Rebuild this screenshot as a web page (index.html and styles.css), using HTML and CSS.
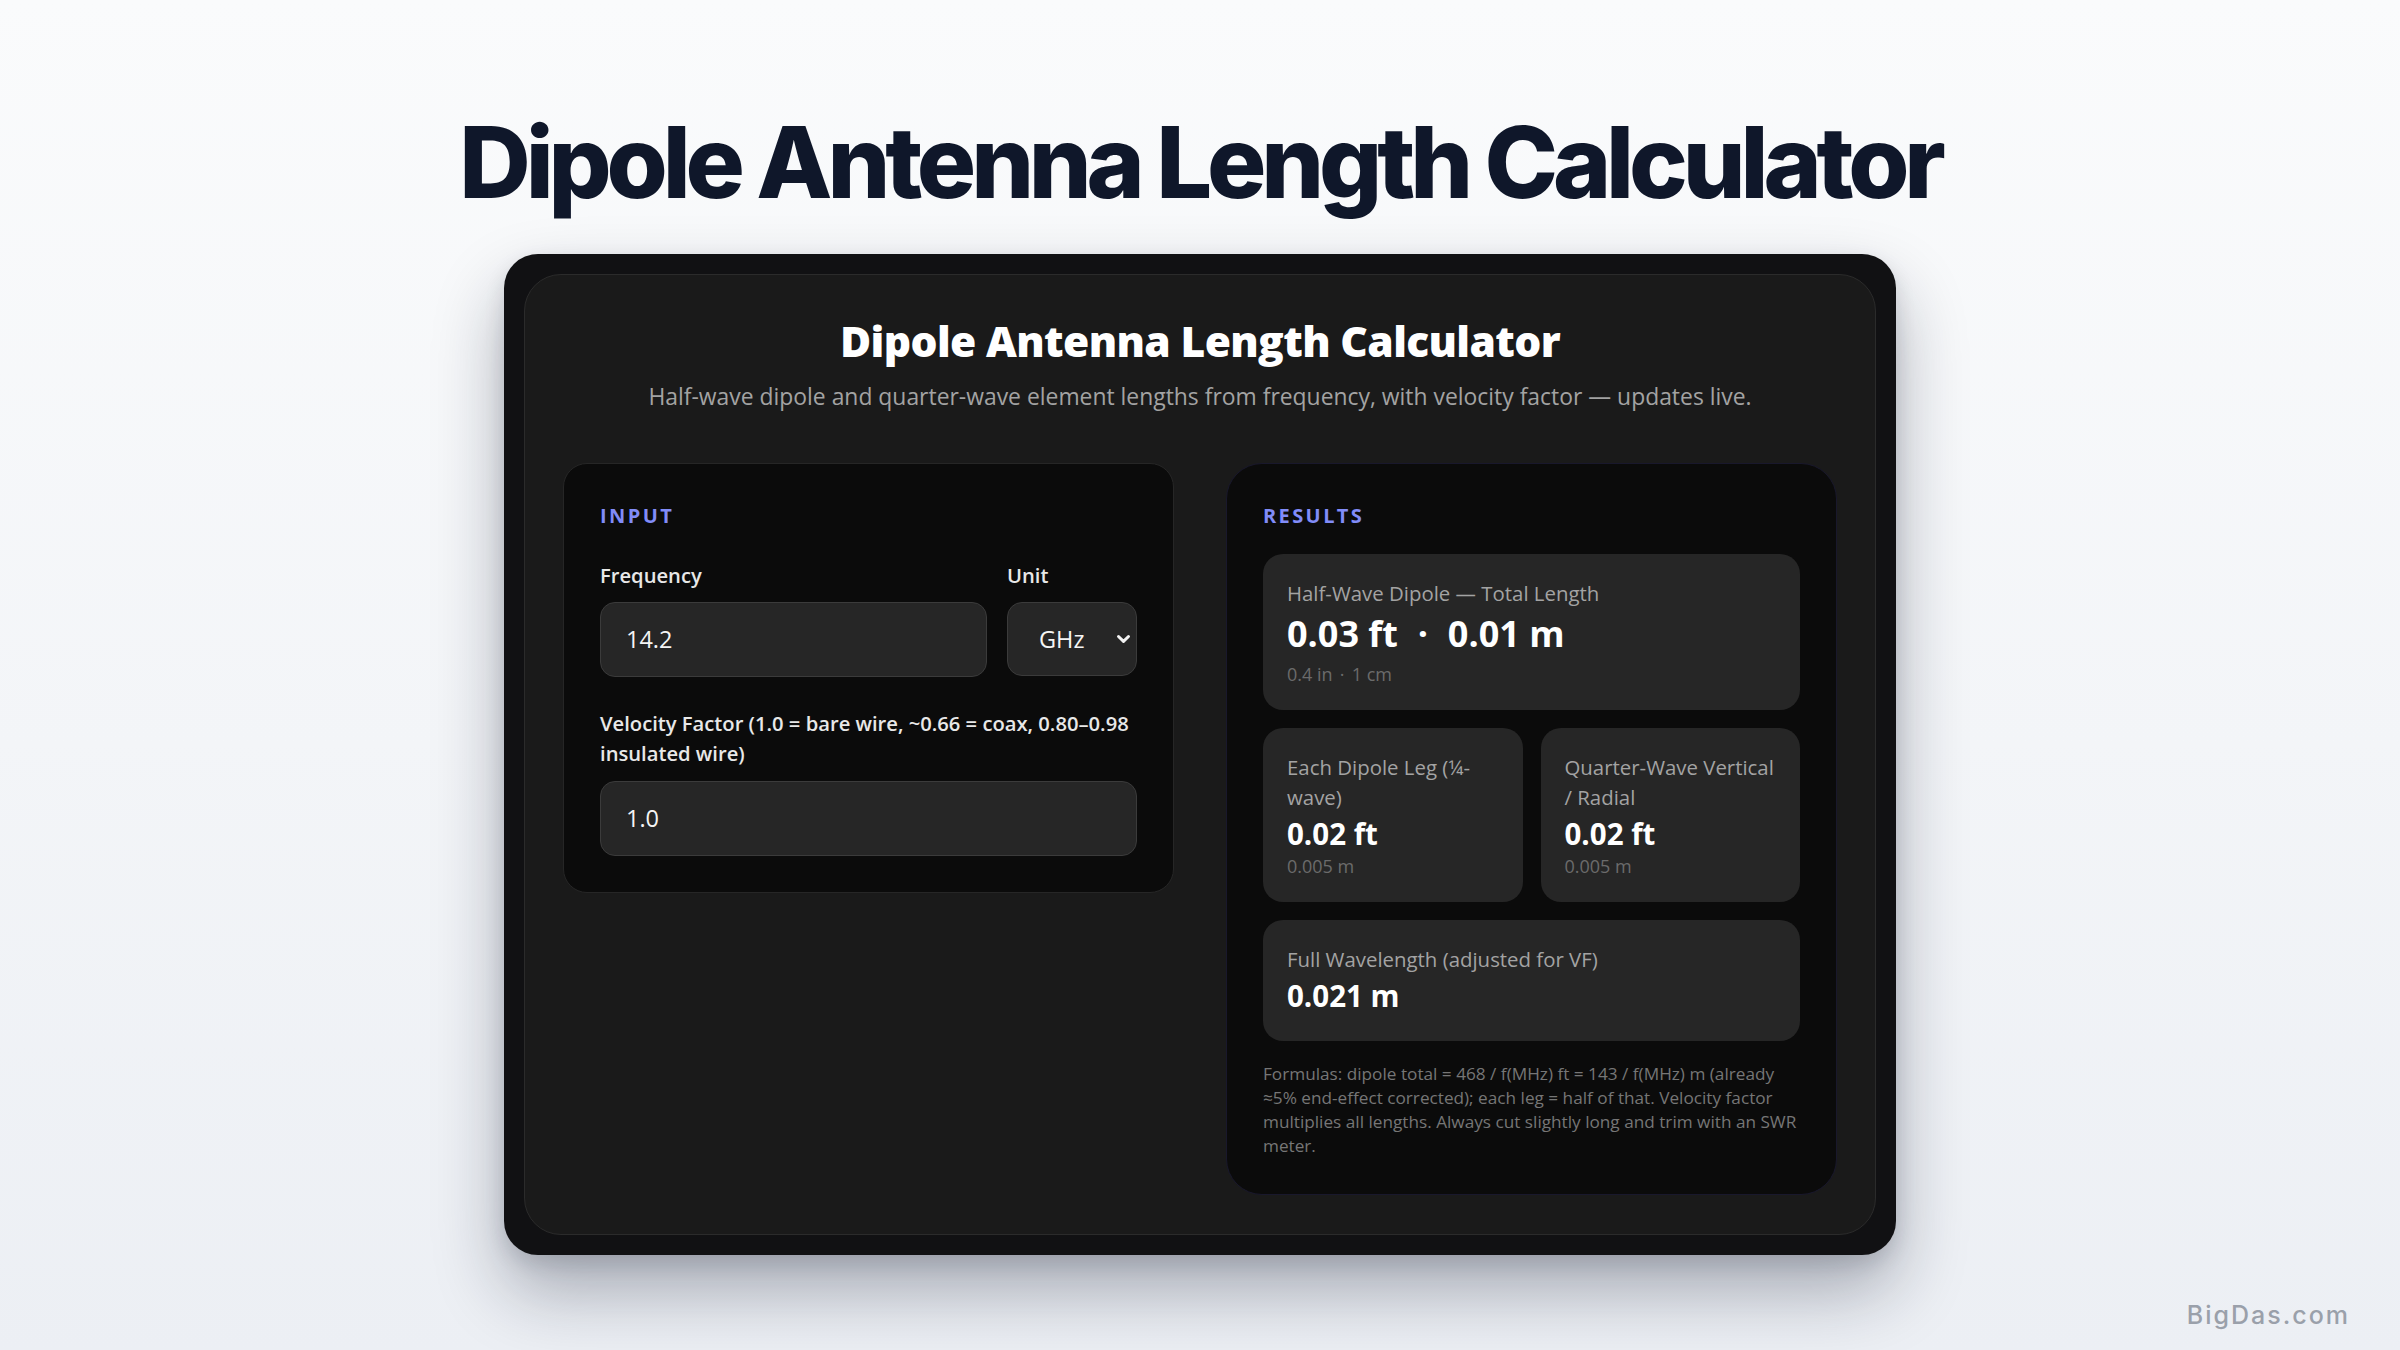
FILE: index.html
```html
<!DOCTYPE html>
<html lang="en">
<head>
<meta charset="utf-8">
<title>Dipole Antenna Length Calculator</title>
<link rel="stylesheet" href="styles.css">
</head>
<body>
<main class="stage">
  <h1 class="hero-title">Dipole Antenna Length Calculator</h1>
  <div class="frame">
    <div class="app">
      <header class="app-header">
        <h2 class="app-title">Dipole Antenna Length Calculator</h2>
        <p class="app-subtitle">Half-wave dipole and quarter-wave element lengths from frequency, with velocity factor — updates live.</p>
      </header>
      <div class="columns">
        <section class="panel panel-input">
          <h3 class="section-label">INPUT</h3>
          <div class="field-row">
            <div class="field field-grow">
              <label class="field-label" for="freq">Frequency</label>
              <input class="text-input" id="freq" type="text" value="14.2">
            </div>
            <div class="field field-unit">
              <span class="field-label">Unit</span>
              <div class="select">
                <span>GHz</span>
                <svg class="chevron" width="15" height="10" viewBox="0 0 15 10"><path d="M2.5 2.5 L7.5 7.3 L12.5 2.5" fill="none" stroke="#f2f2f2" stroke-width="3" stroke-linecap="round" stroke-linejoin="round"/></svg>
              </div>
            </div>
          </div>
          <div class="field field-vf">
            <label class="field-label" for="vf">Velocity Factor (1.0 = bare wire, ~0.66 = coax, 0.80–0.98 insulated wire)</label>
            <input class="text-input" id="vf" type="text" value="1.0">
          </div>
        </section>
        <section class="panel panel-results">
          <h3 class="section-label">RESULTS</h3>
          <div class="cards">
            <div class="card card-main">
              <div class="card-label">Half-Wave Dipole — Total Length</div>
              <div class="card-value card-value-lg">0.03 ft<span class="sep">·</span>0.01 m</div>
              <div class="card-sub card-sub-main">0.4 in<span class="sep">·</span>1 cm</div>
            </div>
            <div class="card-pair">
              <div class="card">
                <div class="card-label">Each Dipole Leg (¼-wave)</div>
                <div class="card-value">0.02 ft</div>
                <div class="card-sub">0.005 m</div>
              </div>
              <div class="card">
                <div class="card-label">Quarter-Wave Vertical / Radial</div>
                <div class="card-value">0.02 ft</div>
                <div class="card-sub">0.005 m</div>
              </div>
            </div>
            <div class="card card-wave">
              <div class="card-label">Full Wavelength (adjusted for VF)</div>
              <div class="card-value">0.021 m</div>
            </div>
          </div>
          <p class="formulas">Formulas: dipole total = 468 / f(MHz) ft = 143 / f(MHz) m (already ≈5% end-effect corrected); each leg = half of that. Velocity factor multiplies all lengths. Always cut slightly long and trim with an SWR meter.</p>
        </section>
      </div>
    </div>
  </div>
  <div class="watermark">BigDas.com</div>
</main>
</body>
</html>
```

FILE: styles.css
```css
* { box-sizing: border-box; }

html, body {
  margin: 0;
  padding: 0;
}

body {
  width: 2400px;
  height: 1350px;
  overflow: hidden;
  background: linear-gradient(180deg, #fafbfc 0%, #f3f5f8 55%, #eceff4 100%);
  font-family: "Open Sans", "Noto Sans", sans-serif;
}

.stage {
  position: relative;
  height: 1350px;
  display: flex;
  flex-direction: column;
  align-items: center;
  padding-top: 102px;
}

.hero-title {
  margin: 0;
  font-family: Inter, "Liberation Sans", sans-serif;
  font-weight: 800;
  font-size: 99px;
  line-height: 120px;
  letter-spacing: -0.052em;
  color: #0f172a;
  white-space: nowrap;
}

.frame {
  margin-top: 32px;
  width: 1392px;
  padding: 20px;
  background: #111113;
  border-radius: 34px;
  box-shadow: 0 36px 70px rgba(15, 23, 42, 0.32), 0 8px 20px rgba(15, 23, 42, 0.12);
}

.app {
  background: #1a1a1a;
  border: 1px solid #2b2b2b;
  border-radius: 37px;
  padding: 39.5px 38px 39px;
}

.app-header {
  text-align: center;
}

.app-title {
  margin: 0;
  font-family: "Open Sans", "Noto Sans", sans-serif;
  font-weight: 800;
  font-size: 42.5px;
  line-height: 52px;
  letter-spacing: -0.015em;
  color: #ffffff;
}

.app-subtitle {
  margin: 15px 0 0;
  font-size: 22.9px;
  line-height: 30px;
  color: #a3a3a3;
}

.columns {
  margin-top: 51px;
  display: grid;
  grid-template-columns: 611px 611px;
  column-gap: 52px;
  align-items: start;
}

.panel {
  background: #0b0b0b;
  border: 1px solid #262626;
  border-radius: 24px;
  padding: 40px 36px 36px;
}

.panel-results {
  border-color: #19182c;
  border-radius: 36px;
}

.section-label {
  margin: 0;
  font-size: 20px;
  line-height: 24px;
  font-weight: 700;
  letter-spacing: 0.12em;
  color: #818cf8;
}

.field-row {
  margin-top: 32px;
  display: flex;
  gap: 20px;
}

.field {
  display: flex;
  flex-direction: column;
}

.field-grow { flex: 1; }

.field-unit { width: 130px; }

.field-label {
  display: block;
  margin-bottom: 12px;
  font-size: 20.2px;
  line-height: 30px;
  font-weight: 600;
  color: #e8e8e8;
}

.field-vf { margin-top: 31px; }

.field-vf .field-label { margin-bottom: 13px; }

.text-input {
  width: 100%;
  height: 75px;
  padding: 0 25px;
  background: #262626;
  border: 1px solid #3b3b3b;
  border-radius: 15px;
  font-family: "Open Sans", "Noto Sans", sans-serif;
  font-size: 23.5px;
  color: #f5f5f5;
  outline: none;
}

.select {
  height: 74px;
  padding: 0 5px 0 31px;
  display: flex;
  align-items: center;
  justify-content: space-between;
  background: #262626;
  border: 1px solid #3b3b3b;
  border-radius: 15px;
  font-size: 23.5px;
  color: #f5f5f5;
}

.chevron { display: block; }

.cards {
  margin-top: 26px;
  display: flex;
  flex-direction: column;
  gap: 18px;
}

.card-pair {
  display: grid;
  grid-template-columns: 1fr 1fr;
  gap: 18px;
}

.card {
  background: #262626;
  border-radius: 20px;
  padding: 24px 24px 23px;
}

.card-wave { padding-bottom: 28px; }

.card-label {
  font-size: 20.4px;
  line-height: 30px;
  color: #a3a3a3;
}

.card-value {
  margin-top: 4px;
  font-size: 29.5px;
  line-height: 1.2;
  font-weight: 700;
  color: #ffffff;
}

.card-value-lg {
  font-size: 36px;
}

.card-value .sep {
  margin: 0 0.55em;
}

.card-sub {
  margin-top: 3px;
  font-size: 18px;
  line-height: 25px;
  color: #6b6b6b;
}

.card-sub-main { margin-top: 7px; }

.card-sub .sep { margin: 0 0.4em; }

.formulas {
  margin: 21px 0 0;
  font-size: 17.2px;
  line-height: 24px;
  color: #767676;
}

.watermark {
  position: absolute;
  right: 50px;
  bottom: 20px;
  font-family: Inter, "Liberation Sans", sans-serif;
  font-weight: 500;
  font-size: 25px;
  letter-spacing: 0.08em;
  color: #9aa0aa;
}
```
